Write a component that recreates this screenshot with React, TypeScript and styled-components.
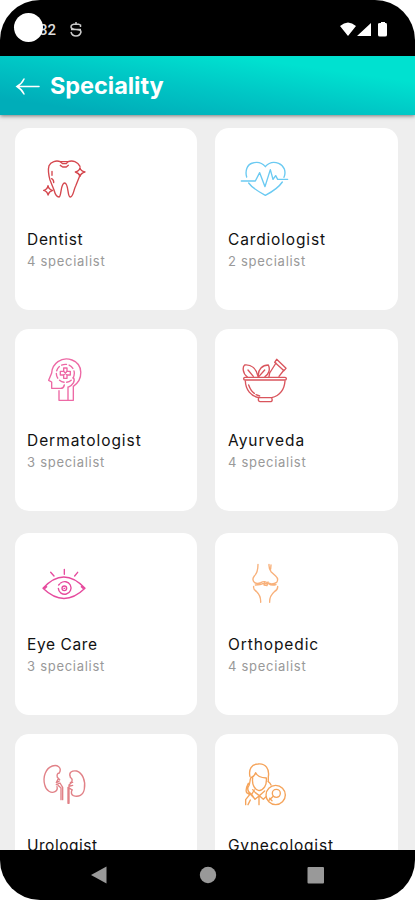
import React from 'react';
import styled, { createGlobalStyle } from 'styled-components';

const GlobalStyle = createGlobalStyle`
  * { box-sizing: border-box; }
  html, body { margin: 0; background: #fff; overflow: hidden; }
`;

const Phone = styled.div`
  width: 415px;
  height: 900px;
  display: flex;
  flex-direction: column;
  overflow: hidden;
  background: #eeeeee;
  border-radius: 40px;
  font-family: Inter, sans-serif;
`;

const StatusBar = styled.div`
  height: 56px;
  flex: none;
  display: flex;
  align-items: flex-start;
  background: #000;
  color: #ddd;
`;

const Camera = styled.div`
  width: 29px;
  height: 29px;
  margin: 13px 0 0 14px;
  border-radius: 50%;
  background: #fff;
  position: relative;
  z-index: 1;
`;

const Clock = styled.span`
  margin: 21px 0 0 -4px;
  font: 500 15px/18px Roboto, sans-serif;
`;

const StatusIcon = styled.svg`
  width: 12px;
  height: 15px;
  margin: 22px 0 0 14px;
`;

const SignalIcons = styled.svg`
  width: 50px;
  height: 18px;
  margin: 20px 25px 0 auto;
`;

const Header = styled.header`
  height: 59px;
  flex: none;
  display: flex;
  align-items: center;
  padding: 2px 0 0 15px;
  background: linear-gradient(to top right, #00adb9 14%, #00c6c5 47%, #00e1d0 78%);
  box-shadow: 0 1px 4px rgba(0, 0, 0, 0.5);
  position: relative;
`;

const BackIcon = styled.svg`
  width: 26px;
  height: 20px;
`;

const Title = styled.h1`
  margin: -2px 0 0 9px;
  color: #fff;
  font-size: 23.5px;
  line-height: 30px;
  font-weight: 700;
  letter-spacing: -0.05px;
`;

const Grid = styled.main`
  flex: 1;
  min-height: 0;
  overflow: hidden;
  display: grid;
  grid-template-columns: 182px 183px;
  grid-template-rows: 201px 204px 201px 182px;
  column-gap: 18px;
  padding: 13px 0 0 15px;
`;

const CardIcon = styled.svg<{ $color: string }>`
  display: block;
  width: 50px;
  height: 50px;
  margin-left: 13px;
  fill: none;
  stroke: ${(p) => p.$color};
  stroke-width: 4.1;
  stroke-linecap: round;
  stroke-linejoin: round;
`;

const Card = styled.section`
  height: 182px;
  padding: 27px 0 0 12px;
  background: #fff;
  border-radius: 14px;

  &:nth-child(even) {
    padding-left: 13px;
  }
  &:nth-child(even) ${CardIcon} {
    margin-left: 12px;
  }
`;

const Name = styled.h2<{ $spacing: number }>`
  margin: 24px 0 0;
  color: #111;
  font-size: 15.5px;
  line-height: 22px;
  font-weight: 400;
  white-space: nowrap;
  letter-spacing: ${(p) => p.$spacing}px;
`;

const Count = styled.p`
  margin: 0;
  color: #999;
  font-size: 13px;
  line-height: 20px;
  white-space: nowrap;
  letter-spacing: 0.72px;
`;

const NavBar = styled.nav`
  height: 50px;
  flex: none;
  display: flex;
  justify-content: center;
  align-items: center;
  background: #000;
`;

const NavIcons = styled.svg`
  width: 236px;
  height: 20px;
  fill: #999;
`;

interface Speciality {
  name: string;
  count?: number;
  color: string;
  box: string;
  spacing: number;
  art: React.ReactNode;
}

const items: Speciality[] = [
  {
    name: 'Dentist', count: 4, color: '#d5484f', box: '90 45 150 150', spacing: 0.7,
    art: (
      <>
        <path d="M151 65C139 60 122 65 117 77C113 92 116 106 120 120L132 150C136 165 140 171 147 171C155 169 151 129 164 129C176 129 172 170 180 171C190 173 190 151 197 138L209 108M174 65C188 60 203 65 210 79M151 65L158 71H169L174 65M151 76L158 81H169L175 76" />
        <path d="M151 65H174M210 83Q212 94 225 96Q213 99 210 109Q207 99 196 96Q208 94 210 83ZM114 137Q116 149 128 151Q117 154 114 165Q112 154 101 151Q112 149 114 137ZM126 94V106M125 116Q132 120 131 128" />
      </>
    ),
  },
  {
    name: 'Cardiologist', count: 2, color: '#6bcaf2', box: '45 45 150 150', spacing: 0.85,
    art: <path d="M65 111C60 94 65 74 83 69C99 64 111 68 121 80C132 67 148 65 161 70C178 77 184 95 177 112M71 129Q82 145 121 166Q158 147 172 126M49 123H91L104 98L120 140L136 89L144 118L152 107L158 118H188" />,
  },
  {
    name: 'Dermatologist', count: 3, color: '#ed69a5', box: '90 33 150 150', spacing: 0.95,
    art: (
      <>
        <path d="M147 137V166H190V124C220 104 221 58 186 45C154 33 126 57 125 84L116 106L125 111V130H152Q161 130 163 120M174 126V164M174 127C189 120 197 108 190 97" />
        <circle cx="166" cy="85" r="27" strokeDasharray="15 8" />
        <path d="M161 69H171V79H181V90H171V100H161V90H151V79H161ZM161 79L171 90M171 79L161 90" />
      </>
    ),
  },
  {
    name: 'Ayurveda', count: 4, color: '#d9555d', box: '45 33 150 150', spacing: 1,
    art: (
      <>
        <rect x="56" y="97" width="128" height="8" rx="4" />
        <path d="M61 108C62 135 78 153 101 158M180 108C178 135 163 152 140 158M101 158Q98 169 105 170H137Q144 169 140 158ZM71 120Q78 139 88 145M93 149L104 153M67 96C51 83 53 65 59 60C79 58 94 71 99 94M69 75L85 94M100 94C98 72 113 60 130 60C137 74 130 89 120 95M102 94L119 75M132 95L134 84L153 54M162 94L177 75M155 43L183 70L177 77L149 52Z" />
      </>
    ),
  },
  {
    name: 'Eye Care', count: 3, color: '#e64b9e', box: '90 30 150 150', spacing: 0.6,
    art: (
      <>
        <path d="M99 115Q161 47 225 115Q162 176 99 115ZM105 115L110 110M219 115L214 110M122 67L132 78M163 58V73M203 67L194 78" />
        <path d="M152 99A19 19 0 1 1 145 115" />
        <circle cx="163" cy="115" r="7" />
        <path d="M146 105L149 102M162 115H164" />
      </>
    ),
  },
  {
    name: 'Orthopedic', count: 4, color: '#f8b17b', box: '45 30 150 150', spacing: 0.9,
    art: <path d="M99 43C99 59 97 70 88 78Q79 89 89 98Q97 103 107 98Q119 91 128 99Q143 105 155 97Q162 87 152 78L138 65Q131 55 132 43M138 45L137 57M86 109Q84 119 95 125Q108 137 107 157M158 109Q159 119 148 125Q133 138 134 157M91 105Q108 104 113 101H131Q139 108 153 104M120 95L117 105L126 107L129 96" />,
  },
  {
    name: 'Urologist', color: '#e18187', box: '90 33 150 150', spacing: 0.5,
    art: (
      <path d="M148 69C157 52 141 43 127 48C107 55 98 80 104 104C108 123 124 131 135 125Q144 120 141 110M148 69Q139 70 142 82L149 89M145 86L139 98L147 94M139 104L150 99L158 112V149M153 149V114L144 106M181 81C175 67 186 61 200 63C217 68 228 93 223 117C220 136 205 142 190 137Q181 132 186 119M181 82Q190 87 184 98L177 105V160M174 160V112M180 108L188 106M179 115L187 120M181 97H188" />
    ),
  },
  {
    name: 'Gynecologist', color: '#f5a45b', box: '45 33 150 150', spacing: 0.8,
    art: (
      <>
        <path d="M75 80C70 57 80 43 99 42C122 39 134 58 130 80V94M83 84C80 104 90 120 102 122C116 120 126 106 124 84Q98 82 92 68Q88 80 78 83C72 92 78 101 69 112Q66 124 77 131M70 100Q60 119 65 128L74 134L62 149V164M83 119L91 128L103 137L119 123M88 120L80 133L90 148L103 137L115 148L123 140M102 140V164M69 164L76 150M75 131L87 144M129 94Q136 99 138 105" />
        <circle cx="152" cy="135" r="29" />
        <circle cx="154" cy="130" r="12" />
        <path d="M145 139L132 151M134 145L141 152" />
      </>
    ),
  },
];

export default function App() {
  return (
    <>
      <GlobalStyle />
      <Phone>
        <StatusBar>
          <Camera />
          <Clock>32</Clock>
          <StatusIcon viewBox="0 0 12 15" fill="none" stroke="#ccc" strokeWidth="1.5">
            <path d="M10.500 5V3Q9 2 6 2Q1 2 1 5Q1 7 6 7.500Q11 7.500 11 10Q10 14 6 14Q2 14 1 10M1 7.500H11M6 0V3" />
          </StatusIcon>
          <SignalIcons viewBox="0 0 50 18" fill="#fff">
            <path d="M0 6Q8 -1 16 6L8 16ZM17 16L31 3V16ZM38 4Q38 3 40 3H41V2H45V3H46Q47 3 47 5V15Q47 16.500 45 16.500H40Q38 16.500 38 15Z" />
          </SignalIcons>
        </StatusBar>
        <Header>
          <BackIcon viewBox="0 0 26 20" fill="none" stroke="#fff" strokeWidth="1.5" strokeLinecap="round">
            <path d="M24 9.500H2M9 2Q7 6.500 2 9.500Q7 12.500 9 17" />
          </BackIcon>
          <Title>Speciality</Title>
        </Header>
        <Grid>
          {items.map((item) => (
            <Card key={item.name}>
              <CardIcon viewBox={item.box} $color={item.color}>{item.art}</CardIcon>
              <Name $spacing={item.spacing}>{item.name}</Name>
              {item.count !== undefined && <Count>{item.count} specialist</Count>}
            </Card>
          ))}
        </Grid>
        <NavBar>
          <NavIcons viewBox="0 0 236 20">
            <path d="M1 10L16.500 1.500V18.500Z" />
            <circle cx="118" cy="10" r="8.2" />
            <rect x="217.500" y="2" width="16.500" height="16.500" rx="1" />
          </NavIcons>
        </NavBar>
      </Phone>
    </>
  );
}
